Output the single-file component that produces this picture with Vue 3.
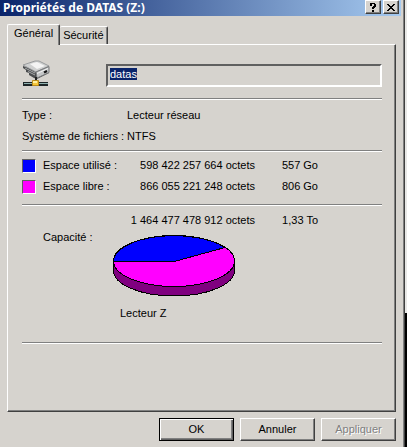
<script setup>
import { onMounted, ref } from 'vue'

const volume = ref('datas')
const nameField = ref(null)
const info = [
  { term: 'Type :', value: 'Lecteur réseau' },
  { term: 'Système de fichiers :', value: 'NTFS' }
]
const usage = [
  { kind: 'used', label: 'Espace utilisé :', bytes: '598 422 257 664 octets', size: '557 Go' },
  { kind: 'free', label: 'Espace libre :', bytes: '866 055 221 248 octets', size: '806 Go' }
]

// The volume name is ready to be overwritten when the dialog opens.
onMounted(() => {
  nameField.value.focus()
  nameField.value.select()
})
</script>

<template>
  <div class="desktop">
    <main class="dialog">
      <header class="titlebar">
        <h1>Propriétés de DATAS (Z:)</h1>
        <button class="caption" type="button" aria-label="Aide">
          <svg width="8" height="9" viewBox="0 0 8 9" shape-rendering="crispEdges"><path d="M1 0h5v1h1v3H6v1H5v1H3V4h1V3h1V1H3v2H1zM3 7h2v2H3z" /></svg>
        </button>
        <button class="caption" type="button" aria-label="Fermer">
          <svg width="8" height="7" viewBox="0 0 8 7" shape-rendering="crispEdges"><path d="M0 0h2v1h1v1h2V1h1V0h2v1H7v1H6v1H5v1h1v1h1v1h1v1H6V6H5V5H3v1H2v1H0V6h1V5h1V4h1V3H2V2H1V1H0z" /></svg>
        </button>
      </header>

      <nav class="tabs" role="tablist">
        <button class="tab active" type="button" role="tab" aria-selected="true">Général</button>
        <button class="tab" type="button" role="tab" aria-selected="false">Sécurité</button>
      </nav>

      <section class="panel" role="tabpanel">
        <div class="identity">
          <svg class="drive" width="30" height="28" viewBox="0 0 30 28" aria-hidden="true">
            <path d="M1 6v2l3 2v2l3 1v2l5 3 3 1 12-6V7L16 11z" fill="#4a4c4e" />
            <path d="M1 5 13 1l4 0 10 5-13 6z" fill="#cfd0d0" stroke="#9a9c9e" />
            <path d="M8 4l7-2 8 4-8 3z" fill="#f4f4f4" />
            <path d="M14 12 27 6.500v6L15 18z" fill="#c4c6c7" stroke="#77797b" />
            <path d="M15 13.500 26 8.500" stroke="#f2f2f2" />
            <path d="M3 8l10 5M6 11.500l7 3.500" stroke="#a9abac" />
            <path d="M22 12.500l3-1.500" stroke="#111" stroke-width="2" />
            <path d="M14 17v4" stroke="#222" stroke-width="2" />
            <path d="M1 22h25v4H1z" fill="#1d2628" />
            <path d="M2 23h24v1H2z" fill="#8fb0ae" />
            <path d="M10.500 20.500h6v5h-6z" fill="#f5c63c" stroke="#b98a18" />
            <path d="M11 22h4" stroke="#fff0a0" stroke-width="2" />
          </svg>
          <input ref="nameField" v-model="volume" class="name" type="text" aria-label="Nom" />
        </div>

        <dl class="info">
          <template v-for="row in info" :key="row.term">
            <dt>{{ row.term }}</dt>
            <dd>{{ row.value }}</dd>
          </template>
        </dl>

        <table class="usage">
          <colgroup><col class="c-label" /><col class="c-bytes" /><col class="c-size" /><col /></colgroup>
          <tbody>
            <tr v-for="row in usage" :key="row.kind">
              <th scope="row"><span class="legend"><i class="swatch" :class="row.kind"></i>{{ row.label }}</span></th>
              <td>{{ row.bytes }}</td>
              <td>{{ row.size }}</td>
              <td></td>
            </tr>
          </tbody>
          <tfoot>
            <tr><td></td><td>1 464 477 478 912 octets</td><td>1,33 To</td><td></td></tr>
          </tfoot>
        </table>

        <div class="capacity">
          <span class="cap-label">Capacité :</span>
          <figure>
            <svg class="pie" width="122" height="62" viewBox="0 0 122 62" shape-rendering="crispEdges" role="img" aria-label="Espace utilisé et espace libre">
              <path d="M.5 26v9.500a60.500 25.500 0 0 0 121 0V26z" fill="#800080" stroke="#000" />
              <ellipse cx="61" cy="26" rx="60.500" ry="25.500" fill="#f0f" stroke="#000" />
              <path d="M.5 26A60.500 25.500 0 0 1 112 12.500L63 26z" fill="#00f" stroke="#000" />
            </svg>
            <figcaption>Lecteur Z</figcaption>
          </figure>
        </div>
        <div class="rule" role="separator"></div>
      </section>

      <footer class="actions">
        <button class="push default" type="button">OK</button>
        <button class="push" type="button">Annuler</button>
        <button class="push" type="button" disabled>Appliquer</button>
      </footer>
    </main>
  </div>
</template>

<style>
body {
  margin: 0;
}
</style>

<style scoped>
* {
  box-sizing: border-box;
}
.desktop {
  display: flex;
  min-height: 100vh;
  padding-right: 2px;
  background: linear-gradient(#e8e8e6 313px, #000 313px);
  font: 11px/13px "Liberation Sans", Arial, sans-serif;
  color: #000;
}
button,
input {
  font: inherit;
  color: inherit;
}
.dialog {
  flex: 1;
  display: flex;
  flex-direction: column;
  background: #d6d3ce;
  border-right: 1px solid #404040;
  box-shadow: inset -1px 0 #808080;
}
.titlebar {
  display: flex;
  align-items: flex-start;
  height: 16px;
  margin-right: 3px;
  padding: 0 2px 0 3px;
  background: linear-gradient(90deg, #0a246a, #a6caf0);
}
h1 {
  flex: 1;
  margin: 0;
  font: bold 12px/16px "Noto Sans", Tahoma, sans-serif;
  color: #fff;
}
.caption {
  display: grid;
  place-items: center;
  width: 16px;
  height: 14px;
  margin-left: 2px;
  padding: 0;
  background: #d6d3ce;
  border: 1px solid;
  border-color: #fff #404040 #404040 #fff;
  box-shadow: inset -1px -1px #808080;
}
.tabs {
  display: flex;
  align-items: flex-end;
  height: 28px;
  padding-left: 7px;
}
.tab {
  height: 18px;
  padding: 0 3px;
  background: #d6d3ce;
  border: 1px solid #fff;
  border-right-color: #404040;
  border-bottom: 0;
  border-left: 0;
  border-radius: 2px 2px 0 0;
  box-shadow: inset -1px 0 #808080;
}
.tab.active {
  position: relative;
  height: 21px;
  margin-bottom: -1px;
  padding: 0 6px 4px;
  border-left: 1px solid #fff;
}
.panel {
  flex: 1;
  margin: 0 8px 0 7px;
  padding: 19px 13px 0 14px;
  border: 1px solid;
  border-color: #fff #404040 #404040 #fff;
  box-shadow: inset -1px -1px #808080;
}
.identity {
  display: flex;
  justify-content: space-between;
  height: 34px;
}
.drive {
  margin-top: -4px;
}
.name {
  flex: 1;
  min-width: 0;
  height: 23px;
  margin-left: 54px;
  padding: 0 2px 4px;
  background: #d6d3ce;
  border: 2px solid;
  border-color: #606060 #fff #fff #606060;
  outline: 0;
}
.name::selection {
  background: #0a246a;
  color: #fff;
}
.info,
.usage,
.rule,
tfoot td {
  border-top: 1px solid #808080;
  box-shadow: inset 0 1px #fff;
}
.info {
  display: grid;
  grid-template-columns: 105px 1fr;
  grid-auto-rows: 21px;
  align-items: center;
  margin: 0;
  padding: 6px 0 3px;
}
dd {
  margin: 0;
}
.usage {
  width: 100%;
  padding-top: 4px;
  table-layout: fixed;
  border-spacing: 0;
}
.c-label {
  width: 100px;
}
.c-bytes {
  width: 133px;
}
.c-size {
  width: 63px;
}
th,
td {
  height: 21px;
  padding: 0;
  font-weight: normal;
  text-align: left;
}
td {
  text-align: right;
  white-space: nowrap;
}
tbody tr:last-child > * {
  height: 28px;
  padding-bottom: 7px;
}
tfoot td {
  height: 27px;
  padding-top: 4px;
}
.legend {
  display: flex;
  align-items: center;
  gap: 7px;
}
.swatch {
  width: 14px;
  height: 14px;
  border: 1px solid;
  border-color: #606060 #fff #fff #606060;
}
.used {
  background: #00f;
}
.free {
  background: #f0f;
}
.capacity {
  display: flex;
}
.cap-label {
  width: 91px;
  padding-left: 21px;
}
figure {
  margin: 0;
  padding-top: 4px;
}
.pie {
  display: block;
}
figcaption {
  margin-top: 10px;
  padding-left: 7px;
}
.rule {
  height: 2px;
  margin-top: 22px;
}
.actions {
  display: flex;
  justify-content: flex-end;
  gap: 6px;
  padding: 6px 8px 6px 0;
}
.push {
  width: 75px;
  height: 23px;
  padding: 0;
  background: #d6d3ce;
  border: 1px solid;
  border-color: #fff #404040 #404040 #fff;
  box-shadow: inset -1px -1px #808080;
}
.push.default {
  border-color: #000;
  box-shadow: inset 1px 1px #fff, inset -1px -1px #606060, inset -2px -2px #808080;
}
.push:disabled {
  color: #808080;
  text-shadow: 1px 1px #fff;
}
</style>
